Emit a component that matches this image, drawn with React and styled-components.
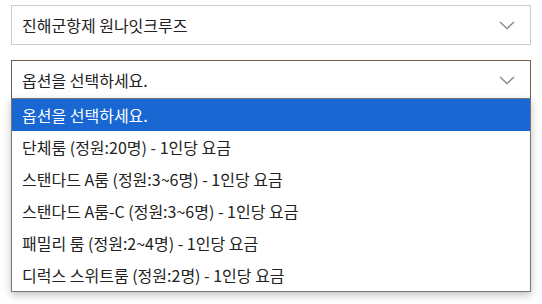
import styled, { createGlobalStyle } from 'styled-components';

const GlobalStyle = createGlobalStyle`
  html, body {
    margin: 0;
    background: #fff;
    font-family: "Noto Sans CJK KR", "Noto Sans", sans-serif;
  }
`;

const Page = styled.div`
  box-sizing: border-box;
  display: flex;
  flex-direction: column;
  gap: 15px;
  padding: 5px 11px;
  width: 542px;
  min-height: 304px;
`;

const SelectWrap = styled.div`
  position: relative;
`;

const SelectBox = styled.div`
  box-sizing: border-box;
  height: 40px;
  display: flex;
  align-items: center;
  justify-content: space-between;
  padding: 0 15px 0 10px;
  border: 1px solid ${p => (p.$open ? '#6e5f4e' : '#cccccc')};
  background: #fff;
  color: #222;
  font-size: 16px;
`;

const Chevron = () => (
  <svg width="16" height="9" viewBox="0 0 16 9">
    <path d="M1 1l7 6.5L15 1" fill="none" stroke="#8a8a8a" strokeWidth="1.4" />
  </svg>
);

const Menu = styled.ul`
  position: absolute;
  top: 38px;
  left: 0;
  right: 0;
  margin: 0;
  padding: 0;
  list-style: none;
  background: #fff;
  border: 1px solid #767676;
  box-shadow: 0 3px 8px rgba(0, 0, 0, 0.25);
  z-index: 2;
`;

const Option = styled.li`
  height: 32px;
  display: flex;
  align-items: center;
  padding: 0 10px;
  font-size: 16px;
  color: ${p => (p.$active ? '#fff' : '#222')};
  background: ${p => (p.$active ? '#1967d2' : 'transparent')};
`;

const options = [
  '옵션을 선택하세요.',
  '단체룸 (정원:20명) - 1인당 요금',
  '스탠다드 A룸 (정원:3~6명) - 1인당 요금',
  '스탠다드 A룸-C (정원:3~6명) - 1인당 요금',
  '패밀리 룸 (정원:2~4명) - 1인당 요금',
  '디럭스 스위트룸 (정원:2명) - 1인당 요금',
];

export default function App() {
  return (
    <>
      <GlobalStyle />
      <Page>
        <SelectWrap>
          <SelectBox>
            <span>진해군항제 원나잇크루즈</span>
            <Chevron />
          </SelectBox>
        </SelectWrap>
        <SelectWrap>
          <SelectBox $open>
            <span>옵션을 선택하세요.</span>
            <Chevron />
          </SelectBox>
          <Menu>
            {options.map((o, i) => (
              <Option key={o} $active={i === 0}>
                {o}
              </Option>
            ))}
          </Menu>
        </SelectWrap>
      </Page>
    </>
  );
}
